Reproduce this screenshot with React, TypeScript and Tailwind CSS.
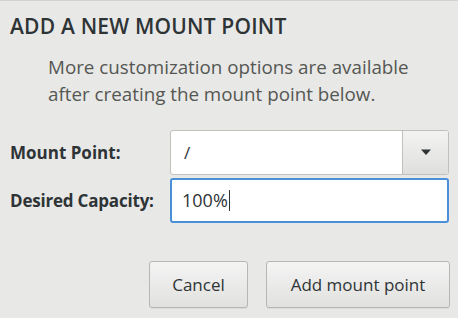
import React from 'react';

// Anaconda-style "add mount point" dialog
const App: React.FC = () => {
  return (
    <div className="w-[458px] h-[318px] overflow-hidden border-t border-[#d3d3d0] bg-[#e8e8e7] text-[#2e3436] font-['Open_Sans',sans-serif]">
      <h1 className="pl-[10px] pt-[11px] text-[21px] font-semibold tracking-[0.2px] leading-[28px] text-[#2e3436]">
        ADD A NEW MOUNT POINT
      </h1>

      <p className="mt-[14px] pl-[48px] text-[18.8px] leading-[27px] text-[#555753]">
        More customization options are available
        <br />
        after creating the mount point below.
      </p>

      <div className="mt-[22px] grid grid-cols-[160px_279px] gap-y-[3px] pl-[10px] items-center">
        <label className="text-[17px] font-bold text-[#2e3436]">Mount Point:</label>
        <div className="flex h-[45px] rounded-[3px] border border-[#c0c0bd] bg-white overflow-hidden">
          <div className="flex-1 flex items-center pl-[13px] text-[17px] text-[#2e3436]">/</div>
          <div className="w-[46px] flex items-center justify-center border-l border-[#c0c0bd] bg-gradient-to-b from-[#f3f3f2] to-[#dfdfdd]">
            <svg width="12" height="7" viewBox="0 0 12 7">
              <path d="M1 0.5 L11 0.5 L6 6 Z" fill="#2e3436" />
            </svg>
          </div>
        </div>

        <label className="text-[17px] font-bold text-[#2e3436] tracking-[-0.2px]">Desired Capacity:</label>
        <div className="flex h-[45px] items-center rounded-[3px] border-2 border-[#4a90d9] bg-white pl-[10px] text-[18px] text-[#2e3436]">
          100%
          <span className="ml-[1px] inline-block h-[21px] w-[1.5px] bg-[#2e3436]" />
        </div>
      </div>

      <div className="mt-[38px] flex justify-end gap-[18px] pr-[8px]">
        <button className="h-[47px] w-[99px] rounded-[3px] border border-[#b6b6b3] bg-gradient-to-b from-[#f4f4f4] to-[#e1e1df] text-[17px] text-[#2e3436] shadow-[0_1px_0_rgba(0,0,0,0.05)]">
          Cancel
        </button>
        <button className="h-[47px] w-[184px] rounded-[3px] border border-[#b6b6b3] bg-gradient-to-b from-[#f4f4f4] to-[#e1e1df] text-[17px] text-[#2e3436] shadow-[0_1px_0_rgba(0,0,0,0.05)]">
          Add mount point
        </button>
      </div>
    </div>
  );
};

export default App;
